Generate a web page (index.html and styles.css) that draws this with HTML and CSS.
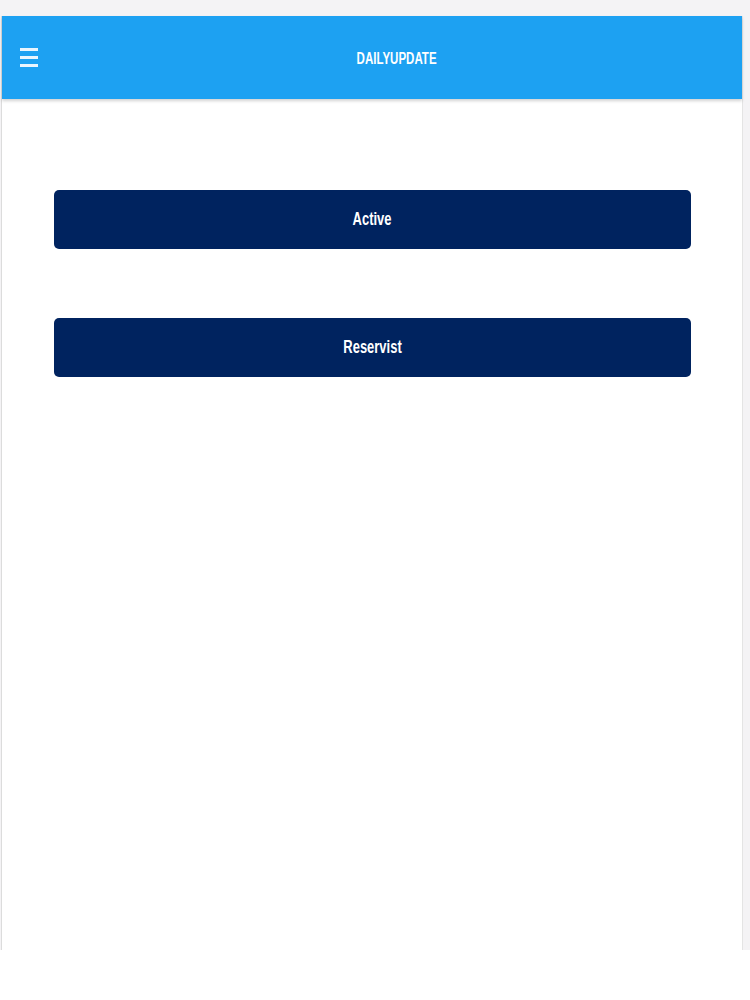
FILE: index.html
```html
<!DOCTYPE html>
<html lang="en">
<head>
<meta charset="utf-8">
<title>DailyUpdate</title>
<link rel="stylesheet" href="styles.css">
</head>
<body>
<div class="screen">
  <div class="app">
    <header class="topbar">
      <button class="menu" aria-label="Menu">
        <span class="menu-line"></span>
        <span class="menu-line"></span>
        <span class="menu-line"></span>
      </button>
      <h1 class="title"><span class="narrow">DAILYUPDATE</span></h1>
    </header>
    <main class="content">
      <button class="action"><span class="narrow">Active</span></button>
      <button class="action"><span class="narrow">Reservist</span></button>
    </main>
  </div>
</div>
</body>
</html>
```

FILE: styles.css
```css
html, body {
  margin: 0;
  padding: 0;
  background: #ffffff;
  font-family: "Liberation Sans", Arial, sans-serif;
}

.screen {
  box-sizing: border-box;
  height: 950px;
  padding: 16px 7px 0 1px;
  background: #f4f3f5;
}

.app {
  box-sizing: border-box;
  height: 100%;
  background: #ffffff;
  border-left: 1px solid #dcdcdc;
  border-right: 1px solid #e4e4e4;
}

.topbar {
  position: relative;
  height: 83px;
  background: #1da1f2;
  box-shadow: 0 2px 3px rgba(0, 0, 0, 0.18);
  display: flex;
  align-items: center;
}

.menu {
  margin-left: 18px;
  padding: 0;
  border: 0;
  background: transparent;
  width: 18px;
  display: flex;
  flex-direction: column;
  gap: 5px;
}

.menu-line {
  display: block;
  height: 3px;
  width: 18px;
  background: #e9f5fe;
}

.title {
  flex: 1;
  margin: 0;
  padding: 3px 0 0 14px;
  text-align: center;
  color: #ffffff;
  font-size: 16px;
  font-weight: bold;
  letter-spacing: 0;
}

.narrow {
  display: inline-block;
  transform: scaleX(0.72);
}

.content {
  padding: 91px 51px 0 52px;
  display: flex;
  flex-direction: column;
  gap: 69px;
}

.action {
  height: 59px;
  border: 0;
  border-radius: 5px;
  background: #00235f;
  color: #ffffff;
  font-family: "Liberation Sans", Arial, sans-serif;
  font-size: 18px;
  font-weight: bold;
  cursor: pointer;
}
```
